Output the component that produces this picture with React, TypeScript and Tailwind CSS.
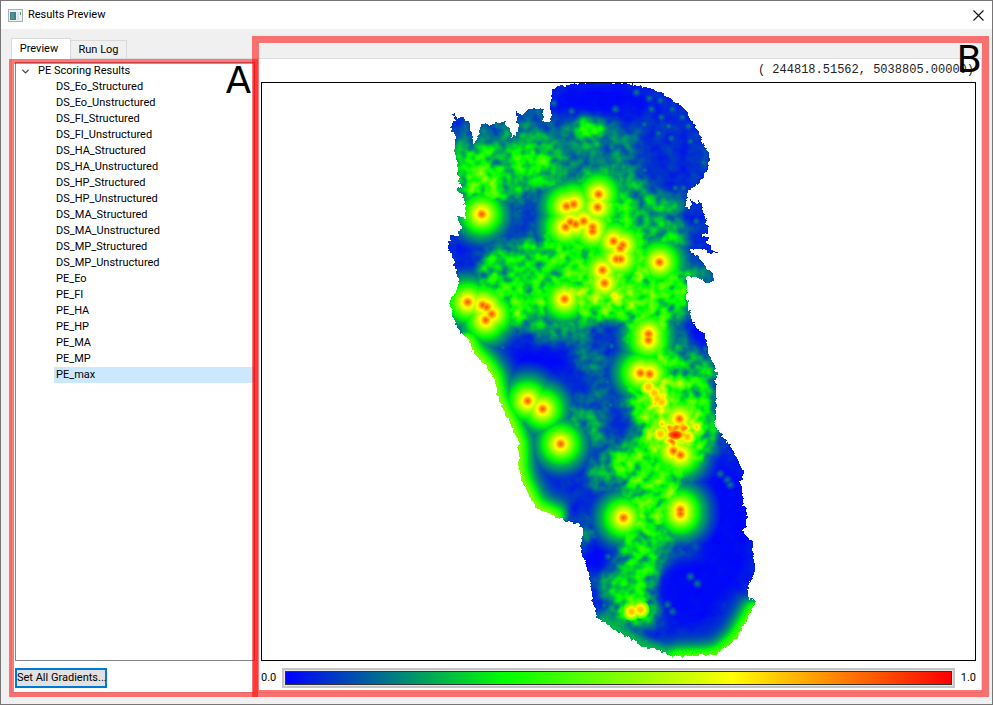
import { useState } from "react";
import { ChevronDown } from "lucide-react";

const layers = [
  "DS_Eo_Structured", "DS_Eo_Unstructured", "DS_FI_Structured", "DS_FI_Unstructured",
  "DS_HA_Structured", "DS_HA_Unstructured", "DS_HP_Structured", "DS_HP_Unstructured",
  "DS_MA_Structured", "DS_MA_Unstructured", "DS_MP_Structured", "DS_MP_Unstructured",
  "PE_Eo", "PE_FI", "PE_HA", "PE_HP", "PE_MA", "PE_MP", "PE_max",
];

// Boundary of the study area.
const outline =
  "551,93 553,88 558,86 568,86 570,84 580,83 627,83 642,86 657,90 670,98 685,110 692,122 698,132 703,142 705,149 709,152 709,158 707,170 700,182 693,187 688,190 686,199 686,208 689,208 692,203 691,200 697,204 698,198 699,202 703,203 703,212 706,222 705,226 708,226 708,232 700,235 709,238 705,242 710,247 717,253 708,252 701,249 688,249 697,257 703,262 705,268 713,273 713,281 708,283 697,277 687,276 686,290 688,310 693,325 705,335 708,348 707,353 714,365 716,377 715,427 723,437 731,448 738,462 744,472 740,483 742,495 743,503 747,513 747,527 742,530 748,538 753,542 753,560 755,565 754,575 750,583 748,587 748,600 751,598 755,603 747,620 737,637 731,644 727,647 724,647 717,655 697,656 670,657 660,651 643,647 633,641 613,630 597,618 592,603 590,580 584,562 580,547 582,530 578,524 562,520 535,508 522,483 518,467 518,443 510,423 497,398 496,388 493,377 485,365 472,352 469,340 460,333 452,317 449,300 455,292 458,283 454,265 451,255 447,248 450,235 458,236 458,229 463,227 458,223 457,215 462,218 466,219 463,198 457,190 461,186 459,182 455,158 454,135 450,129 448,126 455,120 452,113 457,118 463,117 467,122 470,125 471,135 473,145 478,133 481,122 488,125 495,123 505,122 509,129 512,138 518,130 515,110 522,115 527,109 542,108 542,121 550,122";

// Score surface: cx, cy, rx, ry, score.
const terrain: number[][] = [
  [580, 160, 125, 35, 0.15],
  [500, 165, 60, 42, 0.24], [480, 180, 20, 30, 0.38], [535, 160, 22, 17, 0.34], [588, 129, 17, 11, 0.42],
  [520, 130, 30, 14, 0.2], [615, 200, 50, 40, 0.2], [655, 225, 38, 45, 0.23],
  [590, 230, 40, 45, 0.36], [570, 270, 95, 42, 0.34], [650, 290, 42, 38, 0.36], [598, 298, 42, 20, 0.46],
  [520, 265, 35, 25, 0.28], [505, 305, 35, 20, 0.36], [560, 325, 40, 18, 0.2],
  [648, 335, 24, 26, 0.34], [690, 380, 26, 45, 0.28], [655, 390, 30, 38, 0.37], [675, 430, 38, 42, 0.42],
  [657, 398, 12, 18, 0.55], [676, 434, 20, 20, 0.62], [625, 462, 20, 16, 0.47], [602, 475, 20, 18, 0.2],
  [655, 490, 32, 40, 0.35], [645, 525, 26, 24, 0.4], [665, 540, 22, 14, 0.4],
  [640, 560, 22, 40, 0.3], [616, 582, 22, 14, 0.28], [634, 610, 24, 12, 0.5],
  [587, 535, 10, 12, 0.26], [590, 390, 22, 30, 0.13], [578, 415, 20, 16, 0.2], [595, 432, 12, 16, 0.22],
  [590, 360, 20, 12, 0.18], [692, 350, 16, 18, 0.2], [700, 276, 18, 10, 0.2], [682, 547, 20, 24, 0.12],
];
const lowlands: number[][] = [
  [515, 222, 27, 20, 0.09], [462, 252, 16, 20, 0.06], [535, 362, 36, 14, 0.01], [566, 385, 28, 14, 0.05],
  [695, 216, 14, 22, 0.06], [671, 155, 34, 42, 0.06], [600, 99, 50, 15, 0.01], [565, 492, 20, 24, 0.06],
  [701, 335, 13, 16, 0.02], [596, 558, 14, 18, 0.01], [690, 592, 32, 34, 0.01], [725, 530, 26, 68, 0.01],
  [470, 128, 12, 14, 0.11], [495, 133, 12, 12, 0.13], [532, 117, 14, 12, 0.13],
];

const hotspots: number[][] = [
  [481, 214], [566, 206], [573, 204], [598, 194], [597, 207], [565, 227], [570, 222], [575, 224],
  [583, 221], [592, 227], [592, 231], [613, 241], [622, 245], [620, 248], [616, 259], [620, 259],
  [602, 270], [659, 262], [604, 283], [564, 299], [467, 302], [482, 305], [486, 307], [491, 314],
  [485, 320], [648, 334], [648, 340], [640, 373], [649, 374], [527, 401], [542, 409], [560, 444],
  [623, 518], [680, 510], [680, 514], [679, 419], [673, 451], [680, 455],
];

// Isolated low-score observations in the blue parts of the map.
const specks: number[][] = [
  [636, 92], [649, 98], [660, 100], [651, 109], [672, 109], [661, 117], [682, 117], [668, 126], [644, 124],
  [671, 138], [690, 141], [658, 133], [615, 109], [553, 103], [688, 126], [703, 162], [588, 161], [644, 170],
  [625, 165], [675, 188], [683, 188], [643, 185], [661, 196], [696, 221], [571, 111], [590, 155], [672, 211],
  [582, 357], [596, 354], [581, 397], [573, 413], [595, 421], [611, 346], [607, 382], [610, 405], [586, 341],
  [720, 474], [727, 480], [730, 485], [690, 577], [697, 584], [667, 605], [672, 612], [608, 557], [599, 588],
  [604, 606], [705, 349], [698, 355], [706, 366], [689, 357], [502, 347], [515, 323], [519, 211],
];

// Secondary peaks that do not reach the top of the scale.
const peaks: number[][] = [
  [660, 434], [687, 437], [682, 427], [648, 387], [654, 393], [661, 402], [657, 399], [631, 612], [640, 610],
];

const gray = (v: number) => {
  const c = Math.round(v * 255);
  return `rgb(${c},${c},${c})`;
};

const coast = "464,333 472,352 485,365 493,377 497,398 510,423 518,443 518,467 522,483 535,508 562,520";
const southCoast = "757,603 747,620 737,637 727,647 717,655 697,657 670,658";

function Ellipses({ data }: { data: number[][] }) {
  return (
    <>
      {data.map(([x, y, rx, ry, v], i) => (
        <ellipse key={i} cx={x} cy={y} rx={rx} ry={ry} fill={gray(v)} />
      ))}
    </>
  );
}

function HeatMap() {
  return (
    <svg viewBox="261 83 714 577" className="block h-full w-full" role="img" aria-label="PE_max score map">
      <defs>
        <filter id="jagged" filterUnits="userSpaceOnUse" x="420" y="60" width="360" height="620" colorInterpolationFilters="sRGB">
          <feTurbulence type="fractalNoise" baseFrequency="0.25" numOctaves="2" seed="4" result="edge" />
          <feDisplacementMap in="SourceGraphic" in2="edge" scale="5" xChannelSelector="R" yChannelSelector="G" />
        </filter>
        <mask id="area" maskUnits="userSpaceOnUse" x="420" y="60" width="360" height="620">
          <polygon points={outline} fill="#fff" filter="url(#jagged)" shapeRendering="crispEdges" />
        </mask>
        <radialGradient id="spot">
          <stop offset="0" stopColor={gray(0.9)} />
          <stop offset="0.05" stopColor={gray(0.82)} />
          <stop offset="0.11" stopColor={gray(0.7)} />
          <stop offset="0.24" stopColor={gray(0.53)} />
          <stop offset="0.38" stopColor={gray(0.36)} />
          <stop offset="0.52" stopColor={gray(0.23)} />
          <stop offset="0.75" stopColor={gray(0.1)} />
          <stop offset="1" stopColor={gray(0)} />
        </radialGradient>
        <radialGradient id="speck">
          <stop offset="0" stopColor={gray(0.16)} />
          <stop offset="1" stopColor={gray(0)} />
        </radialGradient>
        <radialGradient id="core">
          <stop offset="0" stopColor={gray(1)} />
          <stop offset="0.4" stopColor={gray(0.88)} />
          <stop offset="1" stopColor={gray(0.4)} />
        </radialGradient>
        <radialGradient id="peak">
          <stop offset="0" stopColor={gray(0.77)} />
          <stop offset="0.4" stopColor={gray(0.7)} />
          <stop offset="1" stopColor={gray(0.4)} />
        </radialGradient>
        <filter id="soft" filterUnits="userSpaceOnUse" x="420" y="60" width="360" height="620" colorInterpolationFilters="sRGB">
          <feGaussianBlur stdDeviation="8" />
        </filter>
        <filter id="soften" filterUnits="userSpaceOnUse" x="420" y="60" width="360" height="620" colorInterpolationFilters="sRGB">
          <feGaussianBlur stdDeviation="4" />
        </filter>
        <filter id="feather" filterUnits="userSpaceOnUse" x="420" y="60" width="360" height="620" colorInterpolationFilters="sRGB">
          <feGaussianBlur stdDeviation="6" />
        </filter>
        <filter id="grain" filterUnits="userSpaceOnUse" x="420" y="60" width="360" height="620" colorInterpolationFilters="sRGB">
          <feTurbulence type="fractalNoise" baseFrequency="0.09" numOctaves="2" seed="11" />
          <feColorMatrix values="1.4 0 0 0 -0.2  1.4 0 0 0 -0.2  1.4 0 0 0 -0.2  0 0 0 0 1" result="noise" />
          <feComposite in="SourceGraphic" in2="noise" operator="arithmetic" k1="1.1" k2="0.46" />
        </filter>
        <filter id="ramp" filterUnits="userSpaceOnUse" x="420" y="60" width="360" height="620" colorInterpolationFilters="sRGB">
          <feComponentTransfer>
            <feFuncR type="table" tableValues="0 0 1 1" />
            <feFuncG type="table" tableValues="0 1 1 0" />
            <feFuncB type="table" tableValues="1 0 0 0" />
          </feComponentTransfer>
        </filter>
      </defs>
      <g mask="url(#area)">
        <g filter="url(#ramp)">
          <g filter="url(#grain)">
            <rect x="420" y="60" width="360" height="620" fill={gray(0.05)} />
            <g filter="url(#soft)"><Ellipses data={terrain} /></g>
            <g filter="url(#feather)"><Ellipses data={lowlands} /></g>
          </g>
          <g filter="url(#soften)" className="mix-blend-lighten" fill="none" strokeLinejoin="round">
            {[[52, 0.08], [38, 0.16], [24, 0.28], [12, 0.45], [4, 0.66]].map(([w, v]) => (
              <polyline key={w} points={coast} stroke={gray(v)} strokeWidth={w} />
            ))}
            {[[52, 0.06], [36, 0.14], [22, 0.26], [9, 0.5]].map(([w, v]) => (
              <polyline key={w} points={southCoast} stroke={gray(v)} strokeWidth={w} />
            ))}
            <polyline points="670,656 643,647 613,630 597,618" stroke={gray(0.25)} strokeWidth="16" />
          </g>
          {specks.map(([x, y], i) => (
            <circle key={i} cx={x} cy={y} r="6" fill="url(#speck)" className="mix-blend-lighten" />
          ))}
          {hotspots.map(([x, y], i) => (
            <circle key={i} cx={x} cy={y} r="42" fill="url(#spot)" className="mix-blend-lighten" />
          ))}
          <ellipse cx="675" cy="435" rx="13" ry="8" fill="url(#core)" className="mix-blend-lighten" />
          {peaks.map(([x, y], i) => (
            <circle key={i} cx={x} cy={y} r="9" fill="url(#peak)" className="mix-blend-lighten" />
          ))}
        </g>
      </g>
    </svg>
  );
}

function AppIcon() {
  return (
    <svg width="15" height="13" viewBox="0 0 15 13" aria-hidden="true">
      <rect x="0.5" y="0.5" width="14" height="12" fill="#eef1f3" stroke="#a9b0b5" />
      <rect x="2" y="3" width="6" height="8" fill="#3f7f8c" />
      <rect x="3" y="4" width="3" height="6" fill="#4f9a72" />
      <rect x="9" y="3" width="2" height="8" fill="#dbe2e6" />
      <rect x="12" y="3" width="1" height="3" fill="#57a07c" />
    </svg>
  );
}

export default function App() {
  const [selected, setSelected] = useState("PE_max");
  const [open, setOpen] = useState(true);

  return (
    <div className="flex h-screen flex-col border border-[#777575] bg-[#f0f0f0] font-['Roboto','Noto_Sans',sans-serif] text-[11px] leading-4 text-black">
      <header className="flex h-7 shrink-0 items-center bg-white pl-[7px] pr-[6px]">
        <AppIcon />
        <h1 className="ml-[5px]">Results Preview</h1>
        <button aria-label="Close" className="ml-auto flex size-4 items-center justify-center">
          <svg width="11" height="11" viewBox="0 0 11 11" stroke="#111" strokeWidth="1.1">
            <path d="M.5 .5 10.5 10.5M10.5 .5 .5 10.5" />
          </svg>
        </button>
      </header>

      <main className="relative flex min-h-0 flex-1 flex-col px-[10px] pb-[11px] pt-[9px]">
        <div role="tablist" className="flex h-5 shrink-0 items-end">
          <button role="tab" aria-selected="true" className="relative -mb-px h-[21px] w-[60px] border border-b-0 border-[#d9d9d9] bg-white pr-1">
            Preview
          </button>
          <button role="tab" aria-selected="false" className="h-[18px] w-[56px] border border-b-0 border-l-0 border-[#d9d9d9] bg-[#f0f0f0]">
            Run Log
          </button>
        </div>

        <div role="tabpanel" className="flex min-h-0 flex-1 gap-[6px] border border-[#dcdcdc] bg-white pb-[4px] pl-[3px] pr-[5px] pt-[3px]">
          <section className="flex w-[240px] shrink-0 flex-col gap-[7px]">
            <div className="min-h-0 flex-1 overflow-hidden border border-[#828790]">
              <button onClick={() => setOpen(!open)} aria-expanded={open} className="flex h-4 w-full items-center gap-[7px] pl-1">
                <ChevronDown size={11} strokeWidth={3} className="text-[#444]" />
                PE Scoring Results
              </button>
              {open && (
                <ul className="pl-[38px]">
                  {layers.map((name) => (
                    <li key={name}>
                      <button
                        onClick={() => setSelected(name)}
                        className={
                          name === selected
                            ? "block h-4 w-full bg-[#cce8ff] pl-[2px] text-left"
                            : "block h-4 w-full pl-[2px] text-left"
                        }
                      >
                        {name}
                      </button>
                    </li>
                  ))}
                </ul>
              )}
            </div>
            <button className="h-5 w-[92px] self-start whitespace-nowrap border-2 border-[#0078d7] bg-[#e1e1e1] text-center leading-4">
              Set All Gradients...
            </button>
          </section>

          <section className="flex min-w-0 flex-1 flex-col">
            <output className="h-5 shrink-0 whitespace-pre pr-[2px] text-right font-['Liberation_Mono',monospace] text-[12px] leading-4 text-[#222]">
              ( 244818.51562, 5038805.00000)
            </output>
            <div className="min-h-0 flex-1 border border-black bg-white">
              <HeatMap />
            </div>
            <div className="mt-[7px] flex h-5 shrink-0 items-center">
              <span className="w-[21px]">0.0</span>
              <button aria-label="Edit gradient" className="h-5 flex-1 border-2 border-[#c6c6c6] bg-[#e4e4e4] p-px">
                <span className="block h-full border border-[#333] bg-[linear-gradient(to_right,#0000ff,#00ff00_33%,#ffff00_67%,#ff0000)]" />
              </button>
              <span className="w-[21px] text-right">1.0</span>
            </div>
          </section>
        </div>

        <div className="pointer-events-none absolute bottom-[7px] left-2 top-[30px] w-[249px] border-[5px] border-[#ff0000]/53">
          <span className="absolute right-[2px] top-px font-['DejaVu_Sans',sans-serif] text-[37px] leading-8">A</span>
        </div>
        <div className="pointer-events-none absolute bottom-[7px] left-[251px] right-[3px] top-[7px] border-[7px] border-[#ff0000]/53">
          <span className="absolute right-0 top-px font-['DejaVu_Sans',sans-serif] text-[37px] leading-8">B</span>
        </div>
      </main>
    </div>
  );
}
